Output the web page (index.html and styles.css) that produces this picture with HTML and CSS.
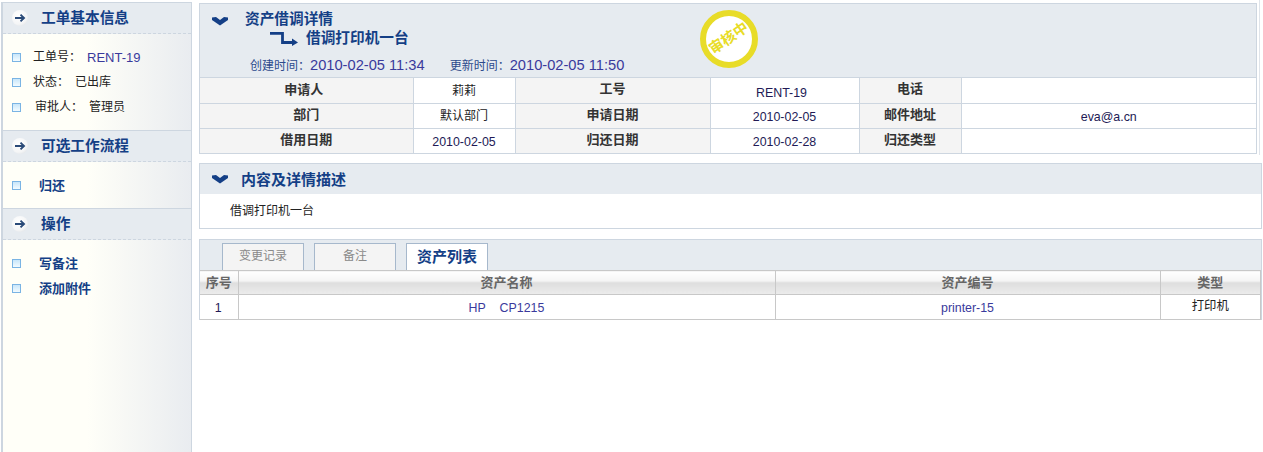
FILE: index.html
```html
<!DOCTYPE html>
<html lang="zh">
<head>
<meta charset="utf-8">
<title>资产借调详情</title>
<link rel="stylesheet" href="styles.css">
</head>
<body>
<svg width="0" height="0" class="defs">
  <defs>
    <symbol id="arrow" viewBox="0 0 16 16">
      <path d="M3 8H11.5M8.5 4.6 12 8 8.5 11.4" fill="none" stroke="#2a4a78" stroke-width="1.9"/>
    </symbol>
    <symbol id="chev" viewBox="0 0 16 9">
      <path d="M0 .5 4 0 8 3 12 0 16 .5V3L8 8.5 0 3Z" fill="#143f86"/>
    </symbol>
  </defs>
</svg>
<div class="page">
  <aside class="side">
    <section class="sec">
      <h3 class="sec-h"><svg class="ball"><use href="#arrow"/></svg>工单基本信息</h3>
      <ul class="list info first">
        <li><i class="sq"></i><span class="lab">工单号：</span><a class="val">RENT-19</a></li>
        <li><i class="sq"></i><span class="lab">状态：</span><span class="plain">已出库</span></li>
        <li><i class="sq"></i><span class="lab lab2">审批人：</span><span class="plain">管理员</span></li>
      </ul>
    </section>
    <section class="sec">
      <h3 class="sec-h"><svg class="ball"><use href="#arrow"/></svg>可选工作流程</h3>
      <ul class="list act one">
        <li><i class="sq"></i><a>归还</a></li>
      </ul>
    </section>
    <section class="sec last">
      <h3 class="sec-h"><svg class="ball"><use href="#arrow"/></svg>操作</h3>
      <ul class="list act">
        <li><i class="sq"></i><a>写备注</a></li>
        <li><i class="sq"></i><a>添加附件</a></li>
      </ul>
    </section>
  </aside>
  <main class="main">
    <div class="detail-wrap">
      <section class="panel detail">
        <div class="head">
          <svg class="chev"><use href="#chev"/></svg>
          <div class="head-txt">
            <h2 class="t1">资产借调详情</h2>
            <div class="t2">
              <svg class="bent" viewBox="0 0 28 14"><path d="M0 1.3H12.5V10.5H23" fill="none" stroke="#143f86" stroke-width="2.8"/><path d="M22 6.5 28 10.5 22 14Z" fill="#143f86"/></svg>
              <span>借调打印机一台</span>
            </div>
            <div class="times"><span>创建时间：<b>2010-02-05 11:34</b></span><span>更新时间：<b>2010-02-05 11:50</b></span></div>
          </div>
          <div class="stamp"><span>审核中</span></div>
        </div>
        <table class="grid">
          <colgroup><col class="c1"><col class="c2"><col class="c3"><col class="c4"><col class="c5"><col></colgroup>
          <tr><th class="off">申请人</th><td>莉莉</td><th>工号</th><td class="num off">RENT-19</td><th>电话</th><td></td></tr>
          <tr><th>部门</th><td>默认部门</td><th>申请日期</th><td class="num">2010-02-05</td><th>邮件地址</th><td class="num">eva@a.cn</td></tr>
          <tr><th>借用日期</th><td class="num">2010-02-05</td><th>归还日期</th><td class="num">2010-02-28</td><th>归还类型</th><td></td></tr>
        </table>
      </section>
    </div>
    <section class="panel desc">
      <div class="head2"><svg class="chev"><use href="#chev"/></svg><h2 class="t3">内容及详情描述</h2></div>
      <p class="desc-txt">借调打印机一台</p>
    </section>
    <section class="panel tabs-panel">
      <div class="tabs">
        <span class="tab">变更记录</span>
        <span class="tab">备注</span>
        <span class="tab on">资产列表</span>
      </div>
      <table class="assets">
        <colgroup><col class="a1"><col class="a2"><col class="a3"><col></colgroup>
        <tr><th>序号</th><th>资产名称</th><th>资产编号</th><th>类型</th></tr>
        <tr><td class="idx">1</td><td class="lnk">HP&nbsp;&nbsp;&nbsp;&nbsp;CP1215</td><td class="lnk">printer-15</td><td class="kind">打印机</td></tr>
      </table>
    </section>
  </main>
</div>
</body>
</html>
```
FILE: styles.css
```css
* { box-sizing: border-box; }
html, body { margin: 0; padding: 0; height: 100%; }
body {
  background: #fff;
  color: #222;
  font: 12px/1.2 "Liberation Sans", "Noto Sans CJK SC", sans-serif;
  overflow: hidden;
}
.defs { position: absolute; }
.page { display: flex; height: 452px; align-items: stretch; }

/* sidebar */
.side {
  width: 191px;
  margin: 2px 0 0 1px;
  border: 1px solid #cdd6e0;
  border-left-width: 2px;
  border-bottom: 0;
  display: flex;
  flex-direction: column;
  background: linear-gradient(90deg, #fffff8 0%, #fffff8 45%, #e9ecf0 100%);
  flex: none;
}
.sec { display: flex; flex-direction: column; }
.sec.last { flex: 1; }
.sec-h {
  margin: 0;
  height: 31px;
  display: flex;
  align-items: center;
  background: #e6ebf0;
  border-bottom: 1px dashed #cdd6e0;
  color: #143f86;
  font-size: 14.67px;
  font-weight: 700;
  padding: 2px 0 0 9px;
}
.sec + .sec .sec-h { border-top: 1px solid #cdd6e0; height: 32px; }
.ball {
  width: 16px; height: 16px; margin: -3px 13px 0 0; flex: none;
  border-radius: 50%;
  background: radial-gradient(circle at 40% 35%, #ffffff 0%, #f4f5f6 60%, #d4d8dc 100%);
}
.list { list-style: none; margin: 0; padding: 0; }
.list li { display: flex; align-items: center; height: 25px; padding-left: 9px; }
.info { height: 96px; padding-top: 11px; }
.one { height: 46px; padding-top: 12px; }
.act { padding-top: 11px; }
.sq {
  width: 9px; height: 9px; flex: none;
  border: 1px solid #7ab4e4;
  background: linear-gradient(#c8e6fa, #f2fbff);
  margin-right: 12px;
}
.lab { color: #222; margin-right: 6px; }
.lab2 { margin-left: 2px; }
.val { color: #3a3a9c; font-size: 13px; }
.plain { color: #222; }
.act a { color: #143f86; font-weight: 700; margin-left: 6px; font-size: 13px; }

/* main */
.main { flex: 1; min-width: 0; padding: 3px 1px 0 7px; display: flex; flex-direction: column; }
.detail-wrap { border-right: 1px solid #dfe4ea; padding: 3px 2px 0 0; margin: -3px 2px 0 0; height: 155px; }
.panel { border: 1px solid #cdd6e0; background: #fff; }
.detail { position: relative; height: 151px; }
.head { height: 74px; background: #e6ebf0; border-bottom: 1px solid #cdd6e0; display: flex; padding: 13px 0 0 12px; }
.chev { width: 16px; height: 9px; flex: none; }
.head-txt { margin-left: 17px; margin-top: -7px; }
.t1 { margin: 0; color: #143f86; font-size: 14.67px; font-weight: 700; line-height: 18px; }
.t2 { display: flex; align-items: center; margin: 2px 0 0 25px; color: #143f86; font-weight: 700; font-size: 14.67px; height: 18px; }
.bent { width: 28px; height: 14px; margin-right: 8px; flex: none; }
.times { display: flex; gap: 25px; margin: 9px 0 0 5px; color: #2c4a8c; font-size: 12px; line-height: 16px; }
.times b { font-weight: 400; color: #3a3a9c; font-size: 14.67px; }
.stamp {
  position: absolute;
  left: 500px; top: 6px;
  width: 58px; height: 58px;
  border-radius: 50%;
  border: 6px solid #e8dc28;
  background: #fff;
  display: flex; align-items: center; justify-content: center;
}
.stamp span { color: #e8dc28; font-weight: 700; font-size: 14.67px; white-space: nowrap; transform: rotate(-35deg); }
.grid { width: 100%; height: 75px; border-collapse: collapse; table-layout: fixed; }
.grid th, .grid td { border-top: 0; border-bottom: 1px solid #cdd6e0; border-left: 1px solid #cdd6e0; text-align: center; padding: 0; height: 25px; font-size: 12px; }
.grid tr:last-child th, .grid tr:last-child td { border-bottom: 0; }
.grid th:first-child { border-left: 0; }
.grid th { background: #f4f4f4; color: #333; font-size: 13px; padding-bottom: 2px; }
.grid th.off { padding: 0 5px 0 0; }
.grid td { color: #222; padding-top: 2px; }
.grid td.num { padding-top: 3px; color: #221a55; font-size: 12.4px; }
.grid td.off { padding: 6px 6px 0 0; }
.c1 { width: 213px; } .c2 { width: 102px; } .c3 { width: 195px; } .c4 { width: 149px; } .c5 { width: 102px; }

.desc { margin-top: 8px; height: 66px; }
.head2 { height: 30px; background: #e6ebf0; display: flex; align-items: center; padding-left: 12px; }
.t3 { margin: 2px 0 0 13px; color: #143f86; font-size: 15px; font-weight: 700; }
.desc-txt { margin: 0; padding: 10px 0 0 30px; color: #222; }

.tabs-panel { margin-top: 10px; height: 81px; background: #e6ebf0; }
.tabs { height: 30px; display: flex; gap: 10px; padding: 3px 0 0 22px; align-items: stretch; }
.tab {
  width: 82px; height: 27px; padding-bottom: 1px;
  border: 1px solid #a6b8cc; border-bottom: 0;
  background: #f4f4f4; color: #8a8a8a;
  display: flex; align-items: center; justify-content: center;
}
.tab.on { background: #fff; color: #143f86; font-weight: 700; font-size: 15px; }
.assets { width: 100%; height: 49px; border-collapse: collapse; table-layout: fixed; background: #fff; }
.assets th, .assets td { border: 1px solid #c8c8c8; text-align: center; padding: 0; font-size: 12.4px; }
.assets tr > :first-child { border-left: 0; }
.assets th {
  height: 24px; color: #666; font-weight: 700; font-size: 13px;
  background: linear-gradient(#ffffff 0%, #f6f6f6 40%, #dedede 50%, #ececec 100%);
}
.assets td { height: 25px; color: #222; padding-top: 2px; }
.assets td.kind { padding: 0 0 2px; }
.assets .lnk { color: #3a3a9c; }
.assets .idx { color: #221a55; padding-right: 1px; }
.a1 { width: 38px; } .a2 { width: 537px; } .a3 { width: 385px; }
```
